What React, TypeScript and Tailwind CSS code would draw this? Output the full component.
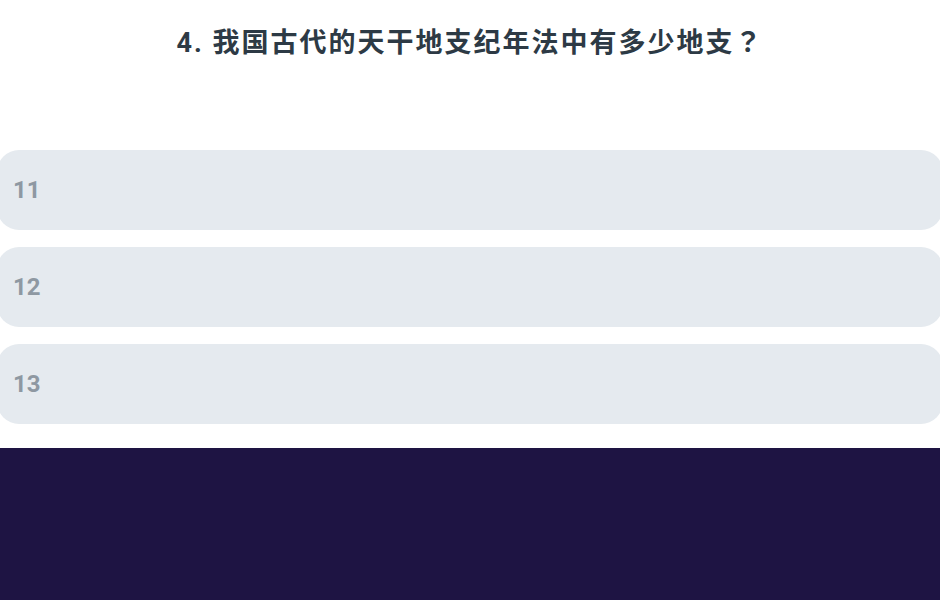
import React from "react";

const options = ["11", "12", "13"];

export default function App() {
  return (
    <div
      className="w-[940px] h-[600px] bg-white flex flex-col overflow-hidden"
      style={{ fontFamily: "Roboto, 'Noto Sans CJK SC', sans-serif" }}
    >
      <div className="h-[86px] flex items-center justify-center pb-[1px]">
        <h1 className="text-[27px] font-bold text-[#2d3a45] tracking-[2px]">
          4. 我国古代的天干地支纪年法中有多少地支
          <span style={{ fontFamily: "'Noto Sans CJK TC', sans-serif" }}>？</span>
        </h1>
      </div>
      <div className="flex flex-col gap-[17px] pt-[64px] -mx-[3px]">
        {options.map((o) => (
          <div
            key={o}
            className="h-[80px] rounded-[22px] bg-[#e5eaef] flex items-center pl-[16px]"
          >
            <span className="text-[24px] font-bold text-[#8e98a2]">{o}</span>
          </div>
        ))}
      </div>
      <div className="mt-[24px] flex-1 bg-[#1e1443]" />
    </div>
  );
}
